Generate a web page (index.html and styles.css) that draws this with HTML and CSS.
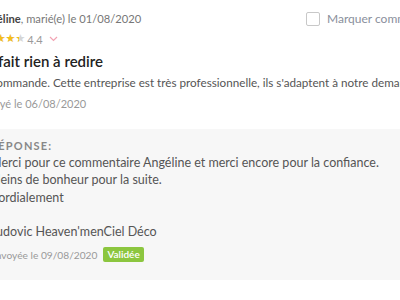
FILE: index.html
```html
<!DOCTYPE html>
<html lang="fr">
<head>
    <meta charset="UTF-8">
    <meta name="viewport" content="width=device-width, initial-scale=1.0">
    <title>Avis</title>
    <link rel="stylesheet" href="styles.css">
</head>
<body>

    <div class="review">
        <div class="review-head">
            <div class="review-author">
                <strong>Angéline</strong>, marié(e) le 01/08/2020
            </div>
            <label class="mark">
                <span class="mark-box"></span>
                Marquer comme lu
            </label>
        </div>

        <div class="rating">
            <span class="stars">
                <span class="stars-on" style="width: 88%">★★★★★</span>
                ★★★★★
            </span>
            <span class="rating-value">4.4</span>
            <svg class="chevron" width="9" height="6" viewBox="0 0 9 6">
                <path d="M1 1 L4.5 4.5 L8 1" fill="none" stroke="#f2a3b3" stroke-width="1.2"/>
            </svg>
        </div>

        <h3 class="review-title">Parfait rien à redire</h3>
        <p class="review-text">La commande. Cette entreprise est très professionnelle, ils s'adaptent à notre demande.</p>
        <div class="review-date">Envoyé le 06/08/2020</div>

        <div class="answer">
            <div class="answer-label">Réponse:</div>
            <p class="answer-text">Merci pour ce commentaire Angéline et merci encore pour la confiance.<br>
            Pleins de bonheur pour la suite.<br>
            Cordialement<br>
            <br>
            Ludovic Heaven'menCiel Déco</p>
            <div class="answer-meta">
                Envoyée le 09/08/2020
                <span class="badge">Validée</span>
            </div>
        </div>
    </div>

</body>
</html>
```

FILE: styles.css
```css
body {
    font-family: Lato, "Open Sans", sans-serif;
    background-color: #fff;
    margin: 0;
    padding: 0;
    overflow: hidden;
}

.review {
    margin-left: -24px;
    width: 520px;
    padding-top: 10px;
    color: #555;
}

.review-head {
    display: flex;
    align-items: center;
    line-height: 18px;
}

.review-author {
    width: 329px;
    padding-left: 1px;
    font-size: 11.2px;
    color: #777;
}

.review-author strong {
    color: #444;
    font-weight: 700;
}

.mark {
    display: flex;
    align-items: center;
    font-size: 12px;
    color: #8a8f9c;
    white-space: nowrap;
}

.mark-box {
    width: 12px;
    height: 12px;
    border: 1px solid #c8c8c8;
    border-radius: 2px;
    margin-right: 7px;
}

.rating {
    display: flex;
    align-items: center;
    margin-top: 2px;
    height: 18px;
}

.stars {
    position: relative;
    font-family: "DejaVu Sans", sans-serif;
    font-size: 11px;
    line-height: 12px;
    color: #d6d6d6;
}

.stars-on {
    position: absolute;
    left: 0;
    top: 0;
    overflow: hidden;
    white-space: nowrap;
    color: #f5be1b;
}

.rating-value {
    font-size: 11px;
    color: #999;
    margin-left: 2px;
}

.chevron {
    margin-left: 6px;
}

.review-title {
    font-size: 15px;
    font-weight: 600;
    color: #222;
    margin: 3px 0 0;
    line-height: 20px;
}

.review-text {
    font-size: 11.7px;
    line-height: 18px;
    margin: 2px 0 0;
    color: #555;
    white-space: nowrap;
}

.review-date {
    font-size: 11px;
    color: #999;
    margin-top: 6px;
    line-height: 14px;
}

.answer {
    background-color: #f7f7f7;
    margin-top: 18px;
    padding: 10px 14px 18px;
    width: 520px;
}

.answer-label {
    font-size: 11px;
    font-weight: 700;
    text-transform: uppercase;
    letter-spacing: 1.2px;
    color: #888;
    line-height: 14px;
}

.answer-text {
    font-size: 12.5px;
    line-height: 17.3px;
    margin: 1px 0 0;
    color: #555;
}

.answer-meta {
    display: flex;
    align-items: center;
    font-size: 10.2px;
    color: #999;
    margin-top: 7px;
    gap: 6px;
}

.badge {
    background-color: #8cc63f;
    color: #fff;
    font-size: 10px;
    font-weight: 600;
    padding: 1px 4px;
    border-radius: 2px;
    line-height: 13px;
}
```
